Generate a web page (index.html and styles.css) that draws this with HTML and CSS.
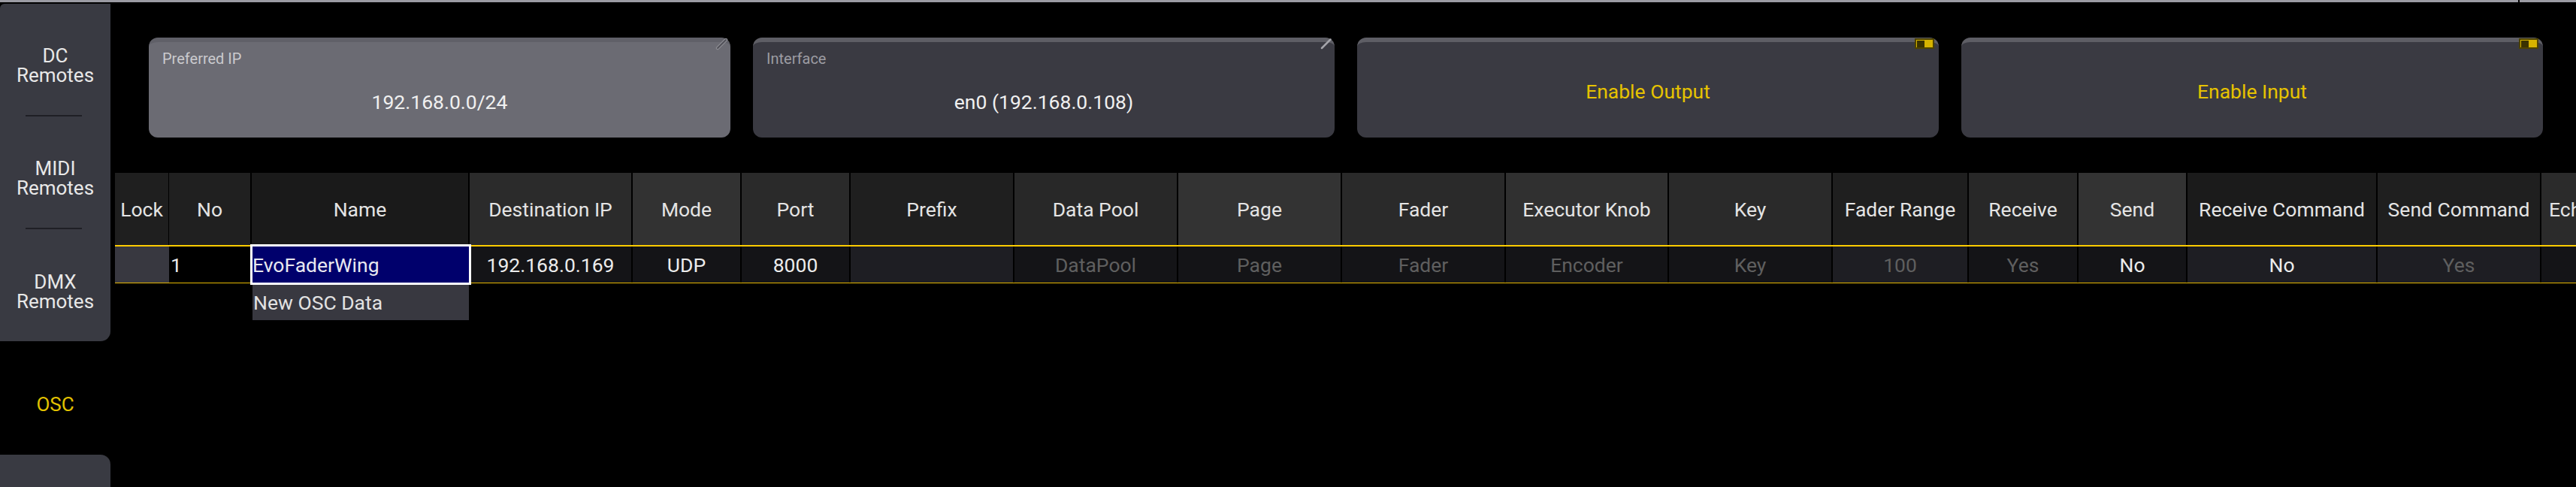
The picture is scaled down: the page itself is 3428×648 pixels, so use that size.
FILE: index.html
```html
<!DOCTYPE html>
<html lang="en">
<head>
<meta charset="utf-8">
<title>OSC</title>
<link rel="stylesheet" href="styles.css">
</head>
<body>
<div class="topbar"><div class="topbar-main"></div><div class="topbar-end"></div></div>
<div class="app">
  <nav class="sidebar">
    <div class="tab-group">
      <div class="tab tab-first">DC<br>Remotes</div>
      <div class="tab-sep"></div>
      <div class="tab">MIDI<br>Remotes</div>
      <div class="tab-sep"></div>
      <div class="tab tab-last">DMX<br>Remotes</div>
    </div>
    <div class="tab tab-active">OSC</div>
    <div class="tab-group tab-group-bottom"></div>
  </nav>
  <main class="content">
    <div class="cards">
      <div class="card card-light">
        <svg class="edit-mark" width="18" height="16" viewBox="0 0 18 16"><line x1="15" y1="2" x2="4" y2="13" stroke="#8c8c92" stroke-width="4.5" stroke-linecap="round"/><line x1="15" y1="2" x2="4" y2="13" stroke="#505058" stroke-width="2" stroke-linecap="round"/></svg>
        <div class="field-label">Preferred IP</div>
        <div class="field-value">192.168.0.0/24</div>
      </div>
      <div class="card">
        <svg class="edit-mark" width="18" height="16" viewBox="0 0 18 16"><line x1="15.5" y1="1.5" x2="4" y2="13" stroke="#a4a4aa" stroke-width="2.5" stroke-linecap="round"/></svg>
        <div class="field-label">Interface</div>
        <div class="field-value">en0 (192.168.0.108)</div>
      </div>
      <div class="card card-toggle">
        <div class="toggle"><div class="toggle-knob"></div></div>
        <span class="toggle-text">Enable Output</span>
      </div>
      <div class="card card-toggle">
        <div class="toggle"><div class="toggle-knob"></div></div>
        <span class="toggle-text">Enable Input</span>
      </div>
    </div>

    <div class="grid">
      <div class="row head">
        <div class="cell c-lock">Lock</div>
        <div class="cell c-no">No</div>
        <div class="cell c-name">Name</div>
        <div class="cell c-dest">Destination IP</div>
        <div class="cell c-mode">Mode</div>
        <div class="cell c-port">Port</div>
        <div class="cell c-prefix">Prefix</div>
        <div class="cell c-pool">Data Pool</div>
        <div class="cell c-page">Page</div>
        <div class="cell c-fader">Fader</div>
        <div class="cell c-knob">Executor Knob</div>
        <div class="cell c-key">Key</div>
        <div class="cell c-range">Fader Range</div>
        <div class="cell c-recv">Receive</div>
        <div class="cell c-send">Send</div>
        <div class="cell c-rcmd">Receive Command</div>
        <div class="cell c-scmd">Send Command</div>
        <div class="cell c-echo">Echo</div>
      </div>
      <div class="row data">
        <div class="cell c-lock"></div>
        <div class="cell c-no left">1</div>
        <div class="cell c-name">
          <div class="name-edit">EvoFaderWing</div>
          <div class="name-menu">New OSC Data</div>
        </div>
        <div class="cell c-dest">192.168.0.169</div>
        <div class="cell c-mode">UDP</div>
        <div class="cell c-port">8000</div>
        <div class="cell c-prefix"></div>
        <div class="cell c-pool muted">DataPool</div>
        <div class="cell c-page muted">Page</div>
        <div class="cell c-fader muted">Fader</div>
        <div class="cell c-knob muted">Encoder</div>
        <div class="cell c-key muted">Key</div>
        <div class="cell c-range muted">100</div>
        <div class="cell c-recv muted">Yes</div>
        <div class="cell c-send">No</div>
        <div class="cell c-rcmd">No</div>
        <div class="cell c-scmd muted">Yes</div>
        <div class="cell c-echo"></div>
      </div>
    </div>
  </main>
</div>
</body>
</html>
```

FILE: styles.css
```css
* { box-sizing: border-box; margin: 0; padding: 0; }

html, body { background: #000; }

body {
  width: 3428px;
  height: 648px;
  overflow: hidden;
  font-family: Roboto, "Noto Sans", "Liberation Sans", sans-serif;
  color: #e6e6e6;
}

/* top strip */
.topbar { display: flex; gap: 2px; height: 3px; }
.topbar-main { flex: 1; background: #9b9ba3; }
.topbar-end { width: 75px; background: #9b9ba3; }

.app { display: flex; margin-top: 2px; height: 643px; }

/* sidebar */
.sidebar { width: 147px; flex-shrink: 0; display: flex; flex-direction: column; }
.tab-group { background: #393a42; border-radius: 6px 0 13px 0; display: flex; flex-direction: column; }
.tab-group-bottom { flex: 1; border-radius: 0 13px 0 0; }
.tab {
  height: 148px;
  display: flex;
  align-items: center;
  justify-content: center;
  text-align: center;
  font-size: 26px;
  line-height: 26px;
  padding-top: 16px;
  color: #e8e8e8;
}
.tab-last { height: 149px; }
.tab-sep { height: 2px; margin: 0 38px 0 34px; background: #1f1f25; }
.tab-active { height: 151px; color: #e2c200; padding-top: 17px; }

/* content */
.content { flex: 1; min-width: 0; padding-left: 6px; display: flex; flex-direction: column; }

.cards { display: flex; gap: 30px; margin: 45px 0 0 45px; }
.card {
  position: relative;
  width: 774px;
  height: 133px;
  flex-shrink: 0;
  background: #3a3a42;
  border-top: 6px solid #5e5e65;
  border-radius: 12px;
  padding: 12px 18px 0;
  display: flex;
  flex-direction: column;
}
.card-light { background: #6b6b73; border-top-color: #606068; }
.field-label { font-size: 20px; line-height: 20px; color: #9c9ca2; }
.card-light .field-label { color: #cacace; }
.field-value { margin-top: 35px; font-size: 26.5px; line-height: 26px; text-align: center; color: #f0f0f0; }
.edit-mark { position: absolute; top: -5px; right: 3px; }

.card-toggle { padding: 4px 0 0; align-items: center; justify-content: center; }
.toggle-text { font-size: 26.5px; line-height: 26px; color: #e6c300; }
.toggle {
  position: absolute;
  top: -5px;
  right: 6px;
  width: 26px;
  height: 14px;
  background: #d6b300;
  border: 2px solid #4e4300;
  display: flex;
  align-items: center;
  padding-left: 1px;
}
.toggle-knob { width: 10px; height: 9px; background: #3a3200; }

/* table */
.grid { margin-top: 47px; width: max-content; }
.row { display: flex; }
.head { height: 98px; border-bottom: 2px solid #ffcc00; }
.data { height: 49px; border-bottom: 1px solid #e6b800; }
.cell {
  flex-shrink: 0;
  border-right: 2px solid #000;
  display: flex;
  align-items: center;
  justify-content: center;
  font-size: 26.5px;
  white-space: nowrap;
  position: relative;
}
.head .cell { color: #e4e4e4; }
.data .cell { background: #141417; color: #ececec; }
.data .left { justify-content: flex-start; padding-left: 2px; }
.data .muted { color: #5f5f5f; }

.c-lock { width: 72px; }
.c-no { width: 110px; }
.c-name { width: 290px; }
.c-dest { width: 217px; }
.c-mode { width: 145px; }
.c-port { width: 145px; }
.c-prefix { width: 218px; }
.c-pool { width: 218px; }
.c-page { width: 218px; }
.c-fader { width: 218px; }
.c-knob { width: 217px; }
.c-key { width: 218px; }
.c-range { width: 181px; }
.c-recv { width: 146px; }
.c-send { width: 145px; }
.c-rcmd { width: 253px; }
.c-scmd { width: 218px; }
.c-echo { width: 82px; }

.head .c-lock { background: #1f1f1f; border-right-width: 1px; }
.head .c-no { background: #202020; }
.head .c-name { background: #1a1a1a; }
.head .c-dest { background: #2b2b2b; }
.head .c-mode { background: #323232; }
.head .c-port { background: #2a2a2a; }
.head .c-prefix { background: #1f1f1f; }
.head .c-pool { background: #282828; }
.head .c-page { background: #333333; }
.head .c-fader { background: #2a2a2a; }
.head .c-knob { background: #303030; }
.head .c-key { background: #2a2a2a; }
.head .c-range { background: #1f1f1f; }
.head .c-recv { background: #282828; }
.head .c-send { background: #333333; }
.head .c-rcmd { background: #1b1b1b; }
.head .c-scmd { background: #1f1f1f; }
.head .c-echo { background: #2b2b2b; justify-content: flex-start; padding-left: 10px; }

.data .c-lock { background: #383840; border-right-width: 0; }
.data .c-no { background: #000; }
.data .c-name { background: #000; }
.data .c-prefix,
.data .c-range,
.data .c-rcmd,
.data .c-scmd { background: #1e1e23; }

/* name editing overlay */
.name-edit {
  position: absolute;
  top: -3px;
  left: -2px;
  right: -4px;
  bottom: -3px;
  z-index: 2;
  background: #00006c;
  border: 3px solid #ffffff;
  color: #e8e8f0;
  display: flex;
  align-items: center;
  padding-left: 0;
}
.name-menu {
  position: absolute;
  top: 51px;
  left: 1px;
  right: -1px;
  height: 47px;
  z-index: 2;
  background: #383840;
  color: #e2e2e2;
  display: flex;
  align-items: center;
  padding-left: 1px;
}
```
